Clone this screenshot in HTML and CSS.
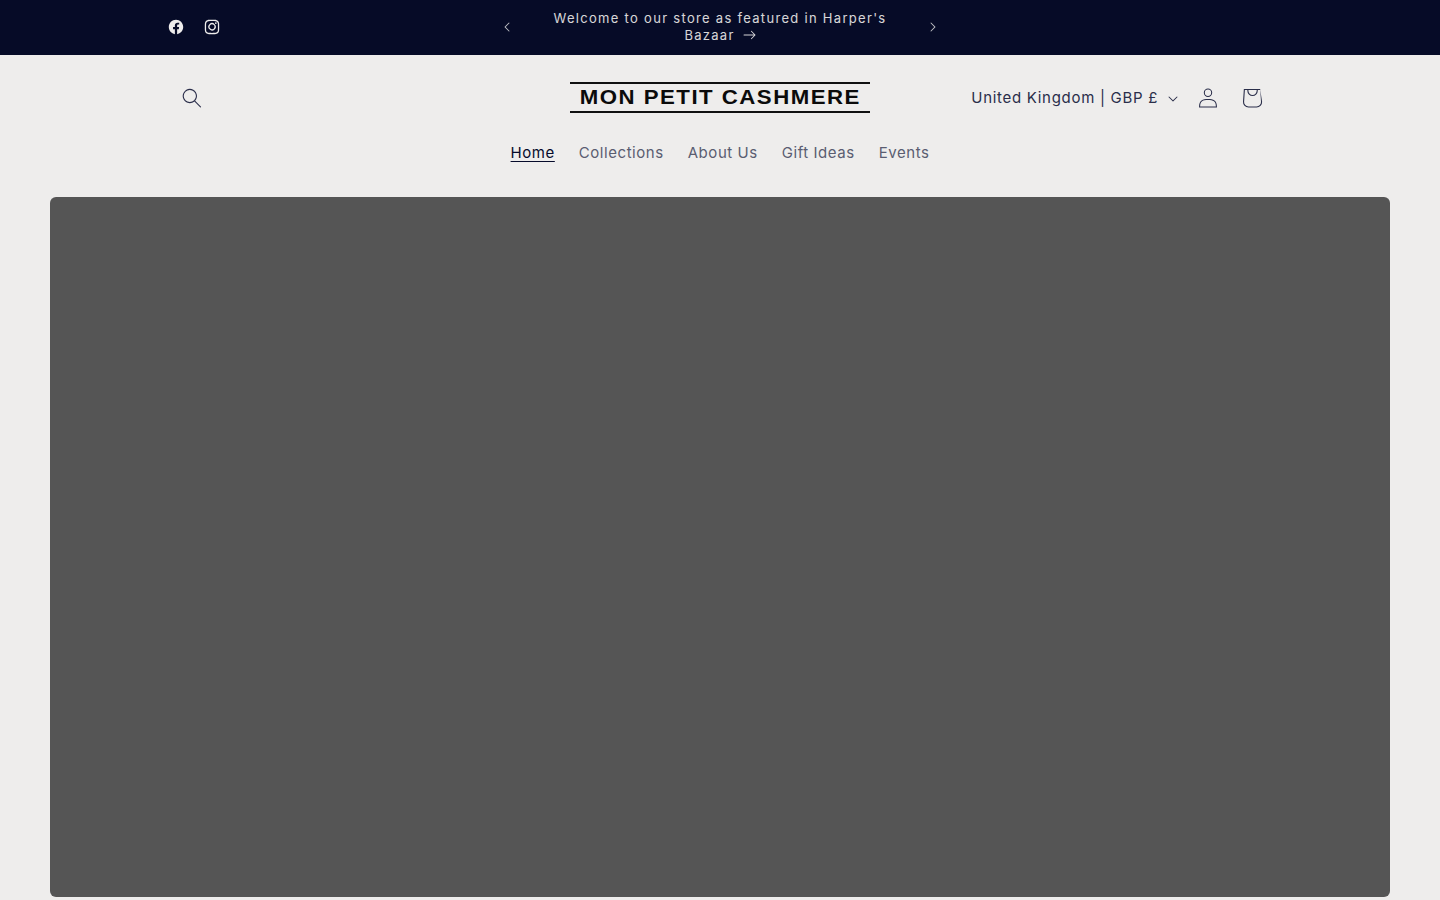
FILE: index.html
```html
<!DOCTYPE html>
<html lang="en">
<head>
    <meta charset="UTF-8">
    <meta name="viewport" content="width=device-width, initial-scale=1.0">
    <title>Mon Petit Cashmere</title>
    <link rel="stylesheet" href="styles.css">
</head>
<body>
    <div class="announcement">
        <div class="announcement-inner">
            <div class="socials">
                <a href="#" class="social-link">
                    <svg viewBox="0 0 20 20" class="social-icon"><path d="M18 10.049C18 5.603 14.419 2 10 2c-4.419 0-8 3.603-8 8.049C2 14.067 4.925 17.396 8.75 18v-5.624H6.719v-2.328h2.03V8.275c0-2.017 1.195-3.132 3.023-3.132.874 0 1.79.158 1.79.158v1.98h-1.009c-.994 0-1.303.621-1.303 1.258v1.51h2.219l-.355 2.326H11.25V18c3.825-.604 6.75-3.933 6.75-7.951Z"/></svg>
                </a>
                <a href="#" class="social-link">
                    <svg viewBox="0 0 20 20" class="social-icon"><path fill-rule="evenodd" clip-rule="evenodd" d="M13.23 3.492c-.84-.037-1.096-.046-3.23-.046-2.144 0-2.39.01-3.238.055-.776.027-1.195.164-1.487.273a2.43 2.43 0 0 0-.912.593 2.486 2.486 0 0 0-.602.922c-.11.282-.238.702-.274 1.486-.046.84-.046 1.095-.046 3.23 0 2.134.01 2.39.046 3.229.004.51.097 1.016.274 1.495.145.365.319.639.602.913.282.282.538.456.92.602.474.176.974.268 1.479.273.848.046 1.103.046 3.238.046 2.134 0 2.39-.01 3.23-.046.784-.036 1.203-.164 1.486-.273.374-.146.648-.329.921-.602.283-.283.447-.548.602-.922.177-.476.27-.979.274-1.486.037-.84.046-1.095.046-3.23 0-2.134-.01-2.39-.055-3.229-.027-.784-.164-1.204-.274-1.495a2.43 2.43 0 0 0-.593-.913 2.604 2.604 0 0 0-.92-.602c-.284-.11-.703-.237-1.488-.273ZM6.697 2.05c.857-.036 1.131-.045 3.302-.045 1.1-.014 2.202.001 3.302.045.664.014 1.321.14 1.943.374a3.968 3.968 0 0 1 1.414.922c.41.397.728.88.93 1.414.23.622.354 1.279.365 1.942C18 7.56 18 7.824 18 10.005c0 2.17-.01 2.444-.046 3.292-.036.858-.173 1.442-.374 1.943-.2.53-.474.976-.92 1.423a3.896 3.896 0 0 1-1.415.922c-.51.191-1.095.337-1.943.374-.857.036-1.122.045-3.302.045-2.171 0-2.445-.009-3.302-.055-.849-.027-1.432-.164-1.943-.364a4.152 4.152 0 0 1-1.414-.922 4.128 4.128 0 0 1-.93-1.423c-.183-.51-.329-1.085-.365-1.943C2.009 12.45 2 12.167 2 10.004c0-2.161 0-2.435.055-3.302.027-.848.164-1.432.365-1.942a4.44 4.44 0 0 1 .92-1.414 4.18 4.18 0 0 1 1.415-.93c.51-.183 1.094-.33 1.943-.366Zm.427 4.806a4.105 4.105 0 1 1 5.805 5.805 4.105 4.105 0 0 1-5.805-5.805Zm1.882 5.371a2.668 2.668 0 1 0 2.042-4.93 2.668 2.668 0 0 0-2.042 4.93Zm5.922-5.942a.958.958 0 1 1-1.355-1.355.958.958 0 0 1 1.355 1.355Z"/></svg>
                </a>
            </div>
            <div class="slider">
                <button class="slider-btn">
                    <svg viewBox="0 0 10 6" class="caret caret-prev"><path fill-rule="evenodd" d="M9.354.646a.5.5 0 00-.708 0L5 4.293 1.354.646a.5.5 0 00-.708.708l4 4a.5.5 0 00.708 0l4-4a.5.5 0 000-.708z"/></svg>
                </button>
                <a href="#" class="slide-text">Welcome to our store as featured in Harper's Bazaar
                    <svg viewBox="0 0 14 10" class="arrow"><path fill-rule="evenodd" d="M8.537.808a.5.5 0 01.817-.162l4 4a.5.5 0 010 .708l-4 4a.5.5 0 11-.708-.708L11.793 5.5H1a.5.5 0 010-1h10.793L8.646 1.354a.5.5 0 01-.109-.546z"/></svg>
                </a>
                <button class="slider-btn">
                    <svg viewBox="0 0 10 6" class="caret caret-next"><path fill-rule="evenodd" d="M9.354.646a.5.5 0 00-.708 0L5 4.293 1.354.646a.5.5 0 00-.708.708l4 4a.5.5 0 00.708 0l4-4a.5.5 0 000-.708z"/></svg>
                </button>
            </div>
        </div>
    </div>

    <header class="header">
        <div class="header-top">
            <a href="#" class="icon-link">
                <svg viewBox="0 0 18 19" class="icon-search"><path fill-rule="evenodd" d="M11.03 11.68A5.784 5.784 0 112.85 3.5a5.784 5.784 0 018.18 8.18zm.26 1.12a6.78 6.78 0 11.72-.7l5.4 5.4a.5.5 0 11-.71.7l-5.41-5.4z"/></svg>
            </a>
            <a href="#" class="logo"><span class="logo-text">MON PETIT CASHMERE</span></a>
            <div class="header-right">
                <button class="country">United Kingdom | GBP £
                    <svg viewBox="0 0 10 6" class="country-caret"><path fill-rule="evenodd" d="M9.354.646a.5.5 0 00-.708 0L5 4.293 1.354.646a.5.5 0 00-.708.708l4 4a.5.5 0 00.708 0l4-4a.5.5 0 000-.708z"/></svg>
                </button>
                <a href="#" class="icon-link">
                    <svg viewBox="0 0 18 19" class="icon-account"><path fill-rule="evenodd" d="M6 4.5a3 3 0 116 0 3 3 0 01-6 0zm3-4a4 4 0 100 8 4 4 0 000-8zm5.58 12.15c1.12.82 1.83 2.24 1.91 4.85H1.51c.08-2.6.79-4.03 1.9-4.85C4.66 11.75 6.5 11.5 9 11.5s4.35.26 5.58 1.15zM9 10.5c-2.5 0-4.65.24-6.17 1.35C1.27 12.98.5 14.93.5 18v.5h17V18c0-3.07-.77-5.02-2.33-6.15-1.52-1.1-3.67-1.35-6.17-1.35z"/></svg>
                </a>
                <a href="#" class="icon-link">
                    <svg viewBox="0 0 40 40" class="icon-cart"><path fill-rule="evenodd" d="M15.75 11.8h-3.16l-.77 11.6a5 5 0 0 0 4.99 5.34h7.38a5 5 0 0 0 4.99-5.33L27.41 11.8h-3.16zm0 1h-2.22l-.71 10.67a4 4 0 0 0 3.99 4.27h7.38a4 4 0 0 0 4-4.27l-.72-10.67h-2.22v.63a4.75 4.75 0 1 1-9.5 0zm8.5 0h-7.5v.63a3.75 3.75 0 1 0 7.5 0z"/></svg>
                </a>
            </div>
        </div>
        <nav class="nav">
            <a href="#" class="nav-link nav-active">Home</a>
            <a href="#" class="nav-link">Collections</a>
            <a href="#" class="nav-link">About Us</a>
            <a href="#" class="nav-link">Gift Ideas</a>
            <a href="#" class="nav-link">Events</a>
        </nav>
    </header>

    <main class="main">
        <div class="banner"></div>
    </main>
</body>
</html>
```

FILE: styles.css
```css
* {
    box-sizing: border-box;
}
body {
    margin: 0;
    background: #eeedec;
    color: #060b2b;
    font-family: Inter, "Open Sans", sans-serif;
    overflow: hidden;
}
a {
    color: inherit;
    text-decoration: none;
}
button {
    background: none;
    border: 0;
    padding: 0;
    color: inherit;
    font: inherit;
}
svg {
    fill: currentColor;
    display: block;
}

/* announcement bar */
.announcement {
    background: #060b27;
    color: #eeedec;
    height: 55px;
}
.announcement-inner {
    width: 1200px;
    height: 54px;
    margin: 0 auto;
    padding: 0 34px;
    display: grid;
    grid-template-columns: 1fr 459px 1fr;
    align-items: center;
}
.socials {
    display: flex;
}
.social-link {
    width: 44px;
    height: 44px;
    display: flex;
    align-items: center;
    justify-content: center;
    margin-right: -8px;
}
.social-icon {
    width: 18px;
    height: 18px;
}
.slider {
    display: flex;
    align-items: center;
}
.slider-btn {
    width: 33px;
    height: 33px;
    flex: none;
    display: flex;
    align-items: center;
    justify-content: center;
    opacity: .8;
}
.caret {
    width: 10px;
    height: 6px;
}
.caret-prev {
    transform: rotate(90deg);
}
.caret-next {
    transform: rotate(-90deg);
}
.slide-text {
    flex: 1;
    padding: 0 28px;
    text-align: center;
    font-size: 13px;
    line-height: 17px;
    letter-spacing: 1.3px;
    opacity: .9;
}
.arrow {
    display: inline-block;
    width: 13px;
    height: 10px;
    margin-left: 3px;
}

/* header */
.header-top {
    width: 1200px;
    margin: 0 auto;
    padding: 21px 50px 0;
    display: grid;
    grid-template-columns: 1fr 300px 1fr;
    align-items: center;
}
.icon-link {
    width: 44px;
    height: 44px;
    display: flex;
    align-items: center;
    justify-content: center;
    color: #2a2e4a;
}
.icon-search,
.icon-account {
    width: 20px;
    height: 20px;
}
.icon-cart {
    width: 44px;
    height: 44px;
}
.logo {
    height: 31px;
    margin-bottom: 2px;
    border-top: 2px solid #111;
    border-bottom: 2px solid #111;
    display: flex;
    align-items: center;
    justify-content: center;
    color: #0b0b0b;
}
.logo-text {
    font-family: "Liberation Sans", sans-serif;
    font-weight: 700;
    font-size: 19.5px;
    letter-spacing: 1.3px;
    white-space: nowrap;
    transform: scaleX(1.14);
}
.header-right {
    display: flex;
    align-items: center;
    justify-content: flex-end;
    margin-right: -4px;
}
.country {
    display: flex;
    align-items: center;
    gap: 10px;
    margin-right: 8px;
    margin-bottom: 2px;
    font-size: 15px;
    letter-spacing: .7px;
    color: #2a2e4a;
    white-space: nowrap;
}
.country-caret {
    width: 10px;
    height: 6px;
    margin-top: 4px;
}

/* nav */
.nav {
    display: flex;
    justify-content: center;
    gap: 24px;
    padding: 22px 0 0;
    height: 77px;
    font-size: 15px;
    letter-spacing: .55px;
}
.nav-link {
    height: 21px;
    line-height: 21px;
    color: #5a5d71;
}
.nav-active {
    color: #060b2b;
    text-decoration: underline;
    text-underline-offset: 3px;
}

/* hero placeholder */
.main {
    padding: 0 50px;
}
.banner {
    height: 700px;
    background: #555555;
    border-radius: 6px;
}
```
